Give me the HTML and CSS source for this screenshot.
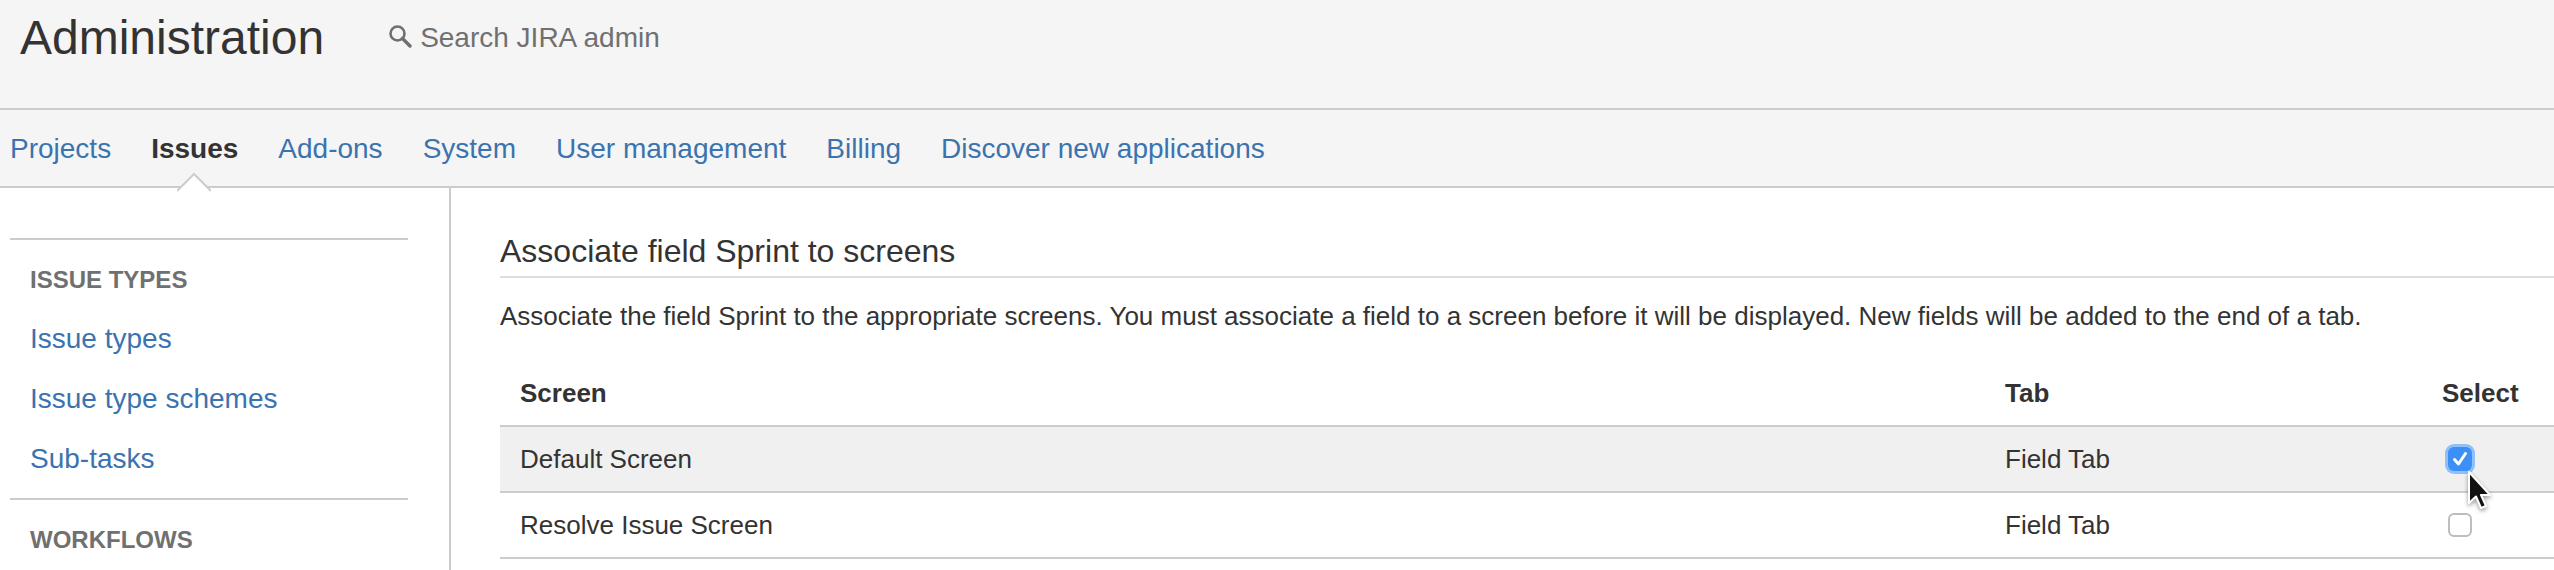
FILE: index.html
```html
<!DOCTYPE html>
<html lang="en">
<head>
<meta charset="utf-8">
<title>Administration</title>
<link rel="stylesheet" href="styles.css">
</head>
<body>
<header class="top">
  <h1 class="title">Administration</h1>
  <div class="search">
    <svg class="search-icon" width="24" height="24" viewBox="0 0 24 24"><circle cx="9.5" cy="9.5" r="7" fill="none" stroke="#707070" stroke-width="2.6"/><path d="M14.5 14.5L22 22" stroke="#707070" stroke-width="3.4" stroke-linecap="round"/></svg>
    <span>Search JIRA admin</span>
  </div>
</header>
<nav class="nav">
  <a href="#">Projects</a>
  <a href="#" class="active">Issues<svg class="caret" width="34" height="20" viewBox="0 0 34 20"><path d="M0 18L17 1L34 18" fill="#fff" stroke="#ccc" stroke-width="2"/><rect x="1" y="18" width="32" height="2" fill="#fff"/></svg></a>
  <a href="#">Add-ons</a>
  <a href="#">System</a>
  <a href="#">User management</a>
  <a href="#">Billing</a>
  <a href="#">Discover new applications</a>
</nav>
<div class="layout">
  <aside class="side">
    <section class="group">
      <h3>ISSUE TYPES</h3>
      <a href="#">Issue types</a>
      <a href="#">Issue type schemes</a>
      <a href="#">Sub-tasks</a>
    </section>
    <section class="group">
      <h3>WORKFLOWS</h3>
    </section>
  </aside>
  <main class="main">
    <h2>Associate field Sprint to screens</h2>
    <p>Associate the field Sprint to the appropriate screens. You must associate a field to a screen before it will be displayed. New fields will be added to the end of a tab.</p>
    <table class="grid">
      <colgroup><col class="c1"><col class="c2"><col class="c3"></colgroup>
      <thead><tr><th>Screen</th><th>Tab</th><th>Select</th></tr></thead>
      <tbody>
        <tr class="hl"><td>Default Screen</td><td>Field Tab</td><td class="sel"><span class="box on"><svg width="24" height="24" viewBox="0 0 24 24"><path d="M6.5 12.5L10.5 17L17.5 6.5" fill="none" stroke="#fff" stroke-width="3" stroke-linecap="round" stroke-linejoin="round"/></svg></span>
          <svg class="cursor" width="30" height="42" viewBox="0 0 30 42"><path d="M4 2V33L11 26.5L16 38L21 36L16 25H25Z" fill="#111" stroke="#fff" stroke-width="2" stroke-linejoin="round"/></svg></td></tr>
        <tr><td>Resolve Issue Screen</td><td>Field Tab</td><td class="sel"><span class="box"></span></td></tr>
      </tbody>
    </table>
  </main>
</div>
</body>
</html>
```
FILE: styles.css
```css
html, body { margin: 0; height: 570px; overflow: hidden; background: #fff; }
body { font-family: "Liberation Sans", Arial, sans-serif; font-size: 28px; color: #333; }
a { color: #3b73af; text-decoration: none; }

.top { height: 108px; background: #f5f5f5; border-bottom: 2px solid #ccc; display: flex; align-items: flex-start; padding-left: 20px; }
.title { margin: 0; font-size: 48px; font-weight: 400; line-height: 76px; color: #333; }
.search { display: flex; align-items: center; gap: 8px; margin-left: 64px; height: 76px; color: #707070; font-size: 28px; }
.search-icon { display: block; margin-top: -4px; }

.nav { height: 75px; padding-top: 1px; background: #f5f5f5; border-bottom: 2px solid #ccc; display: flex; gap: 40px; padding-left: 10px; align-items: center; }
.nav a { position: relative; }
.nav .active { color: #333; font-weight: 700; }
.caret { position: absolute; left: 26px; top: 40px; }

.layout { display: flex; }
.side { flex: none; width: 451px; box-sizing: border-box; height: 382px; border-right: 2px solid #ccc; padding: 50px 41px 0 10px; }
.group { border-top: 2px solid #ccc; padding-left: 20px; display: flex; flex-direction: column; }
.group:first-child { height: 260px; box-sizing: border-box; }
.group h3 { margin: 27px 0 0; font-size: 24px; line-height: 26px; font-weight: 700; color: #707070; }
.group a { display: block; line-height: 60px; }
.group h3 + a { margin-top: 16px; }

.main { flex: 1; padding: 43px 0 0 49px; min-width: 0; }
.main h2 { margin: 0; font-size: 32px; font-weight: 400; line-height: 40px; padding-bottom: 5px; border-bottom: 2px solid #ddd; }
.main p { margin: 18px 0 0; font-size: 26px; line-height: 40px; white-space: nowrap; }

.grid { border-collapse: collapse; table-layout: fixed; width: 2054px; margin-top: 25px; }
.c1 { width: 1485px; }
.c2 { width: 437px; }
.grid th, .grid td { text-align: left; padding: 0 0 0 20px; font-size: 26px; }
.grid th { height: 64px; border-bottom: 2px solid #ccc; font-weight: 700; }
.grid td { height: 64px; border-bottom: 2px solid #ccc; }
.grid .hl td { background: #f0f0f0; }
.grid .sel { position: relative; padding-left: 0; }
.box { display: block; width: 24px; height: 24px; box-sizing: border-box; margin-left: 26px; border: 2px solid #bdbdbd; border-radius: 6px; background: #fff; }
.box.on { border: 0; background: #3b8ff5; box-shadow: 0 0 0 3px #8fc0f9; }
.box svg { display: block; }
.cursor { position: absolute; left: 43px; top: 43px; z-index: 2; filter: drop-shadow(0 2px 2px rgba(0,0,0,.4)); }
```
